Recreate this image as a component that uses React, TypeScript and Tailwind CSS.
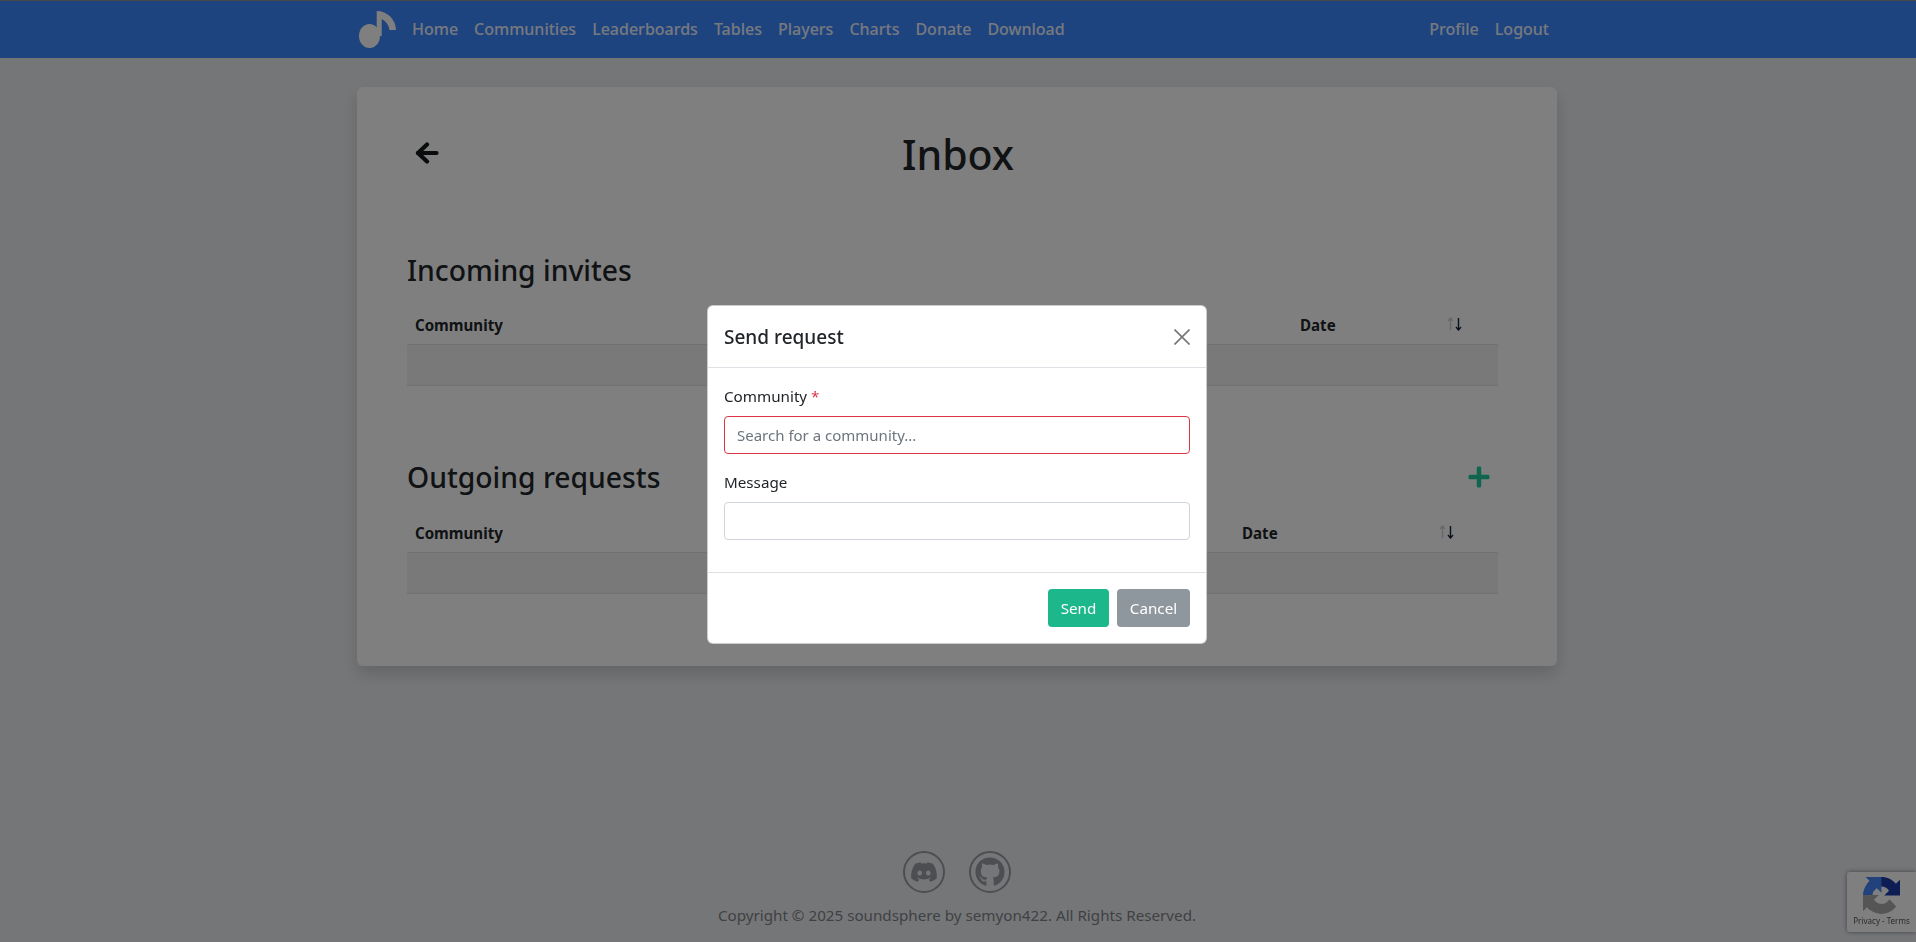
import { FaDiscord, FaGithub, FaPlus } from "react-icons/fa";

const navLinks = ["Home", "Communities", "Leaderboards", "Tables", "Players", "Charts", "Donate", "Download"];

const Logo = () => (
  <svg width="37" height="37" viewBox="0 0 37 37" fill="#fff">
    <ellipse cx="10.5" cy="25" rx="10.5" ry="12" />
    <path d="M17.7 25V0A19.3 19.3 0 0 1 37 19H30.5A14 14 0 0 0 22.7 8V25Z" />
  </svg>
);

const BackArrow = () => (
  <svg width="24" height="22" viewBox="0 0 24 22" fill="none" stroke="#14171a" strokeWidth="4.2" strokeLinecap="round" strokeLinejoin="round">
    <path d="M3 11H21.5" />
    <path d="M12 2.5L3 11L12 19.5" />
  </svg>
);

const SortArrows = () => (
  <svg width="15" height="14" viewBox="0 0 15 14" fill="none" strokeWidth="1.4">
    <g stroke="#d0d0d0">
      <path d="M3.5 13V1.5" />
      <path d="M1 4L3.5 1L6 4" />
    </g>
    <g stroke="#14233f">
      <path d="M11.5 1V12.5" />
      <path d="M9 10L11.5 13L14 10" />
    </g>
  </svg>
);

const InboxTable = ({ dateWidth, sortWidth }: { dateWidth: string; sortWidth: string }) => (
  <table className="w-full table-fixed border-collapse text-[15.1px] text-[#212529]">
    <thead>
      <tr className="h-[40px] border-b border-[#dee2e6]">
        <th className="px-2 pt-[3px] text-left font-bold">Community</th>
        <th className={`px-2 pt-[3px] text-left font-bold ${dateWidth}`}>Date</th>
        <th className={`px-2 text-left ${sortWidth}`}>
          <SortArrows />
        </th>
      </tr>
    </thead>
    <tbody>
      <tr className="h-[41px] border-b border-[#dee2e6] bg-[#f2f2f2]">
        <td colSpan={3}></td>
      </tr>
    </tbody>
  </table>
);

const Recaptcha = () => (
  <div className="fixed right-0 bottom-[10px] flex h-[60px] w-[69px] flex-col items-center rounded-l-[3px] bg-white pt-[5px] shadow-[0_0_5px_rgba(128,128,128,1)]">
    <svg width="37" height="37" viewBox="0 0 64 64">
      <path
        d="M64 31.955l-.033-1.37V4.687l-7.16 7.16C50.948 4.674 42.033.093 32.05.093c-10.4 0-19.622 4.96-25.458 12.64l11.736 11.86a15.55 15.55 0 0 1 4.754-5.334c2.05-1.6 4.952-2.906 8.968-2.906.485 0 .86.057 1.135.163 4.976.393 9.288 3.14 11.828 7.124l-8.307 8.307c10.522-.04 22.4-.066 27.295.001"
        fill="#1c3aa9"
      />
      <path
        d="M31.9 0l-1.37.033H4.63l7.16 7.16C4.617 13.05.036 21.967.036 31.95c0 10.4 4.96 19.622 12.64 25.458l11.86-11.736a15.55 15.55 0 0 1-5.334-4.754c-1.6-2.05-2.906-4.952-2.906-8.968 0-.485.057-.86.163-1.135.393-4.976 3.14-9.288 7.124-11.828l8.307 8.307c-.04-10.522-.066-22.4.001-27.295"
        fill="#4285f4"
      />
      <path
        d="M0 32l.033 1.37v25.898l7.16-7.16c5.857 7.173 14.774 11.754 24.757 11.754 10.4 0 19.622-4.96 25.458-12.64L45.672 38.36a15.55 15.55 0 0 1-4.754 5.334c-2.05 1.6-4.952 2.906-8.968 2.906-.485 0-.86-.057-1.135-.163-4.976-.393-9.288-3.14-11.828-7.124l8.307-8.307c-10.522.04-22.4.066-27.295-.001"
        fill="#ababab"
      />
    </svg>
    <div className="mt-[1px] text-[8px] leading-[12px] whitespace-nowrap text-[#555]">Privacy - Terms</div>
  </div>
);

const SendRequestModal = () => (
  <div className="fixed inset-0 flex items-center justify-center bg-black/50 pt-[7px] pr-[2px]">
    <div className="w-[500px] rounded-md border border-black/20 bg-white text-[15.2px] text-[#212529]">
      <div className="flex h-[62px] items-center justify-between border-b border-[#dee2e6] px-4">
        <h5 className="text-[19px] leading-6 font-medium">Send request</h5>
        <svg width="16" height="16" viewBox="0 0 16 16" stroke="#757575" strokeWidth="1.6">
          <path d="M0.5 0.5L15.5 15.5M15.5 0.5L0.5 15.5" />
        </svg>
      </div>
      <div className="px-4 pt-4 pb-[32px]">
        <label className="mb-2 block leading-6">
          Community <span className="text-[#dc3545]">*</span>
        </label>
        <input
          className="mb-4 block h-[38px] w-full rounded-[4px] border border-[#dc3545] px-3 text-[15px] placeholder:text-[#6c757d] focus:outline-none"
          placeholder="Search for a community..."
        />
        <label className="mb-2 block leading-6">Message</label>
        <input className="block h-[38px] w-full rounded-[4px] border border-[#ced4da] px-3 focus:outline-none" />
      </div>
      <div className="flex justify-end gap-2 border-t border-[#dee2e6] p-4">
        <button className="h-[38px] w-[61px] rounded-[4px] bg-[#1cb78a] text-white">Send</button>
        <button className="h-[38px] w-[73px] rounded-[4px] bg-[#8f979e] text-white">Cancel</button>
      </div>
    </div>
  </div>
);

const App = () => {
  return (
    <div className="flex min-h-screen flex-col items-center bg-[#ebedf0] font-['Noto_Sans',sans-serif] text-[#212529]">
      <nav className="h-[58px] w-full border-t border-[#8f8f8f] bg-[#3d88ff] pr-[2px]">
        <div className="mx-auto flex h-full w-[1200px] items-center">
          <a className="mr-2 ml-[2px]">
            <Logo />
          </a>
          <div className="flex flex-1 items-center pb-[2px] font-medium text-[#ecf2fe]">
            {navLinks.map((link) => (
              <a key={link} className="px-2">
                {link}
              </a>
            ))}
            <div className="ml-auto flex">
              <a className="px-2">Profile</a>
              <a className="px-2">Logout</a>
            </div>
          </div>
        </div>
      </nav>

      <div className="w-full pr-[2px]">
        <main className="mx-auto mt-[29px] w-[1200px] rounded-md bg-white pt-[43px] pr-[59px] pb-[72px] pl-[50px] shadow-[0_8px_16px_rgba(0,0,0,0.15)]">
          <div className="relative mr-[-11px] mb-[75px] flex h-[48px] items-center justify-center">
            <div className="absolute top-[12px] left-[8px]">
              <BackArrow />
            </div>
            <h1 className="text-[41px] leading-[48px] font-medium">Inbox</h1>
          </div>

          <h2 className="mb-[16px] text-[28.3px] leading-[35px] font-medium">Incoming invites</h2>
          <InboxTable dateWidth="w-[147px]" sortWidth="w-[59px]" />

          <div className="mt-[74px] mb-[18px] flex items-center justify-between">
            <h2 className="text-[28.3px] leading-[35px] font-medium">Outgoing requests</h2>
            <FaPlus className="mr-[7px] text-[24px] text-[#22c99a]" />
          </div>
          <InboxTable dateWidth="w-[197px]" sortWidth="w-[67px]" />
        </main>
      </div>

      <footer className="mt-auto flex w-full flex-col items-center pr-[2px] pb-[15px] text-[15.2px] text-[#808289]">
        <div className="flex gap-6">
          <span className="flex h-[42px] w-[42px] items-center justify-center rounded-full border-2 border-[#9a9ca3] text-[#9a9ca3]">
            <FaDiscord className="text-[28px]" />
          </span>
          <span className="flex h-[42px] w-[42px] items-center justify-center rounded-full border-2 border-[#9a9ca3] text-[#9a9ca3]">
            <FaGithub className="text-[30px]" />
          </span>
        </div>
        <p className="mt-[10px] leading-6">Copyright © 2025 soundsphere by semyon422. All Rights Reserved.</p>
      </footer>

      <Recaptcha />
      <SendRequestModal />
    </div>
  );
};

export default App;
